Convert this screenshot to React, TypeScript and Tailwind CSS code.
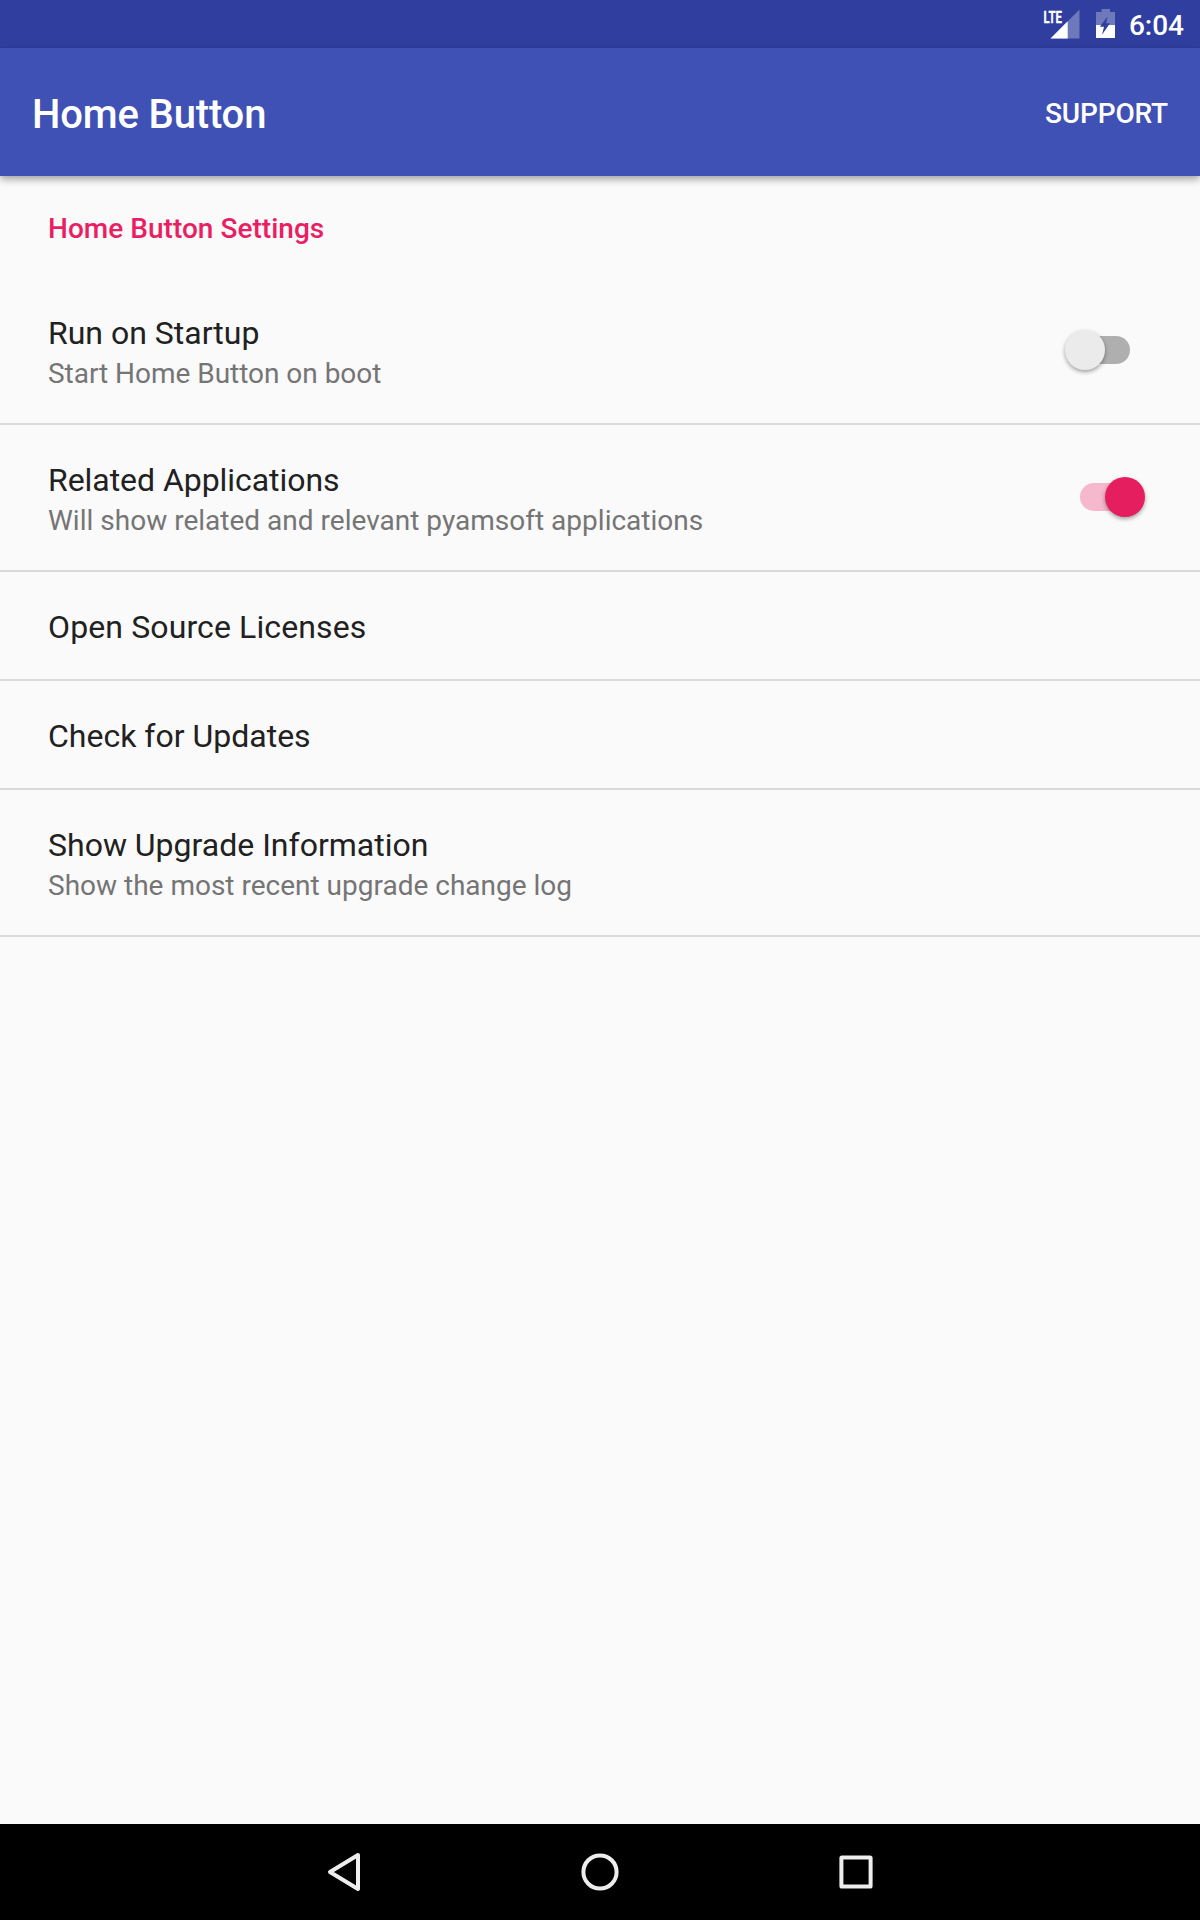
import React from "react";

type Row = {
  title: string;
  titleClass?: string;
  summary?: string;
  summaryClass?: string;
  checked?: boolean;
};

const rows: Row[] = [
  {
    title: "Run on Startup",
    summary: "Start Home Button on boot",
    summaryClass: "tracking-[-0.03px]",
    checked: false,
  },
  {
    title: "Related Applications",
    titleClass: "tracking-[-0.05px]",
    summary: "Will show related and relevant pyamsoft applications",
    summaryClass: "tracking-[0.01px]",
    checked: true,
  },
  { title: "Open Source Licenses", titleClass: "tracking-[0.12px]" },
  { title: "Check for Updates" },
  {
    title: "Show Upgrade Information",
    summary: "Show the most recent upgrade change log",
  },
];

function Switch({ on }: { on: boolean }) {
  return (
    <div role="switch" aria-checked={on} className="relative mt-[52px] h-10 w-20">
      <div
        className={`absolute left-[15px] top-[6px] h-7 w-[50px] rounded-full ${
          on ? "bg-[#f5b8cd]" : "bg-[#afafaf]"
        }`}
      />
      <div
        className={`absolute top-0 size-10 rounded-full shadow-[0_2px_4px_rgba(0,0,0,0.36)] ${
          on ? "left-10 bg-[#e51e60]" : "left-0 bg-[#ebebeb]"
        }`}
      />
    </div>
  );
}

function SignalIcon() {
  return (
    <svg width="40" height="34" viewBox="-4 -4 40 34" className="mt-[5px]">
      <path d="M35.5 .5V29.5H6.5Z" fill="#fff" fillOpacity=".3" />
      <path d="M23.7 12.3V29.5H6.5Z" fill="#fff" />
      <text
        x="-0.5"
        y="13.6"
        textLength="18.4"
        lengthAdjust="spacingAndGlyphs"
        fill="#fff"
        stroke="#fff"
        strokeWidth="0.3"
        fontSize="17"
        fontWeight="700"
      >
        LTE
      </text>
    </svg>
  );
}

function BatteryIcon() {
  return (
    <svg width="19" height="30" viewBox="0 0 19 30" className="ml-4 mt-[9px]">
      <path d="M5.5 0H14V3H19V16H0V3H5.5Z" fill="#fff" fillOpacity=".3" />
      <path d="M0 16H19V29H0Z" fill="#fff" />
      <path d="M11.3 7.7L3.8 17.8H8L6 25.8L14 14.3H10.2Z" fill="#303f9f" />
    </svg>
  );
}

export default function App() {
  return (
    <div className="flex h-[1920px] w-[1200px] flex-col bg-[#fafafa] font-['Roboto',sans-serif]">
      <div className="flex h-12 items-start justify-end bg-[#303f9f] pr-4 text-white">
        <SignalIcon />
        <BatteryIcon />
        <span className="ml-[14px] pt-[9px] text-[28px] font-medium leading-[33px]">6:04</span>
      </div>
      <header className="relative z-10 flex h-32 items-start justify-between bg-[#3f51b5] px-8 text-white shadow-[0_3px_8px_rgba(0,0,0,0.38)]">
        <h1 className="pt-[43px] text-[40px] font-medium leading-[47px] tracking-[-0.15px]">
          Home Button
        </h1>
        <button className="pt-[49px] text-[28px] font-medium leading-[33px] tracking-[-0.15px]">
          SUPPORT
        </button>
      </header>
      <main className="flex-1">
        <h2 className="h-[102px] px-12 pt-[36px] text-[28px] font-medium leading-[33px] tracking-[0.03px] text-[#e91e63]">
          Home Button Settings
        </h2>
        {rows.map((row) => (
          <div
            key={row.title}
            className={`flex items-start justify-between border-b-2 border-[#dadada] pl-12 pr-[55px] ${
              row.summary ? "h-[147px]" : "h-[109px]"
            }`}
          >
            <div className="pt-[35px]">
              <div className={`text-[32px] leading-[40px] text-[#212121] ${row.titleClass ?? ""}`}>
                {row.title}
              </div>
              {row.summary && (
                <div className={`text-[28px] leading-[41px] text-[#757575] ${row.summaryClass ?? ""}`}>
                  {row.summary}
                </div>
              )}
            </div>
            {row.checked !== undefined && <Switch on={row.checked} />}
          </div>
        ))}
      </main>
      <nav className="flex h-24 items-center justify-center bg-black">
        <button className="flex w-64 justify-center" aria-label="Back">
          <svg width="40" height="40" viewBox="0 0 40 40" fill="none" stroke="#eee" strokeWidth="4">
            <path d="M34 3L6 20L34 37Z" strokeLinejoin="round" />
          </svg>
        </button>
        <button className="flex w-64 justify-center" aria-label="Home">
          <svg width="40" height="40" viewBox="0 0 40 40" fill="none" stroke="#eee" strokeWidth="4">
            <circle cx="20" cy="20" r="16.6" />
          </svg>
        </button>
        <button className="flex w-64 justify-center" aria-label="Overview">
          <svg width="40" height="40" viewBox="0 0 40 40" fill="none" stroke="#eee" strokeWidth="4">
            <rect x="5.4" y="5.4" width="29.2" height="29.2" rx="0.6" strokeLinejoin="round" />
          </svg>
        </button>
      </nav>
    </div>
  );
}
